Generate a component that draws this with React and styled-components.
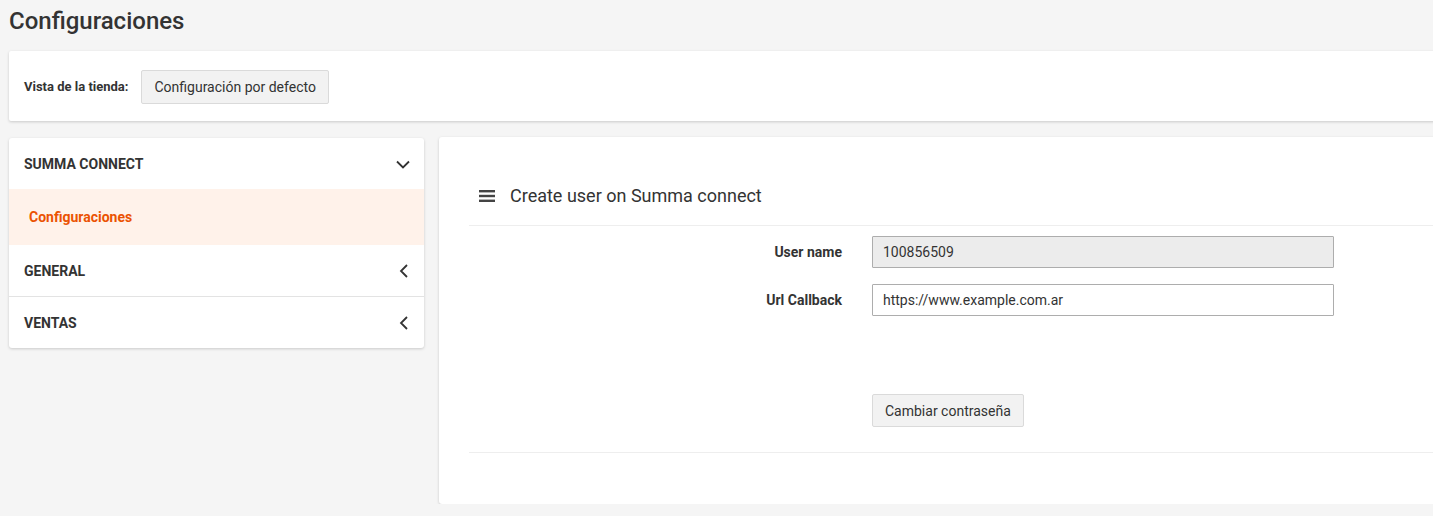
import { createGlobalStyle } from "styled-components";
import styled from "styled-components";

const GlobalStyle = createGlobalStyle`
  html, body {
    margin: 0;
    padding: 0;
    background: #f5f5f5;
    overflow: hidden;
  }
  body {
    font-family: Roboto, "Liberation Sans", sans-serif;
    color: #333;
  }
`;

const menu = [
  { title: "SUMMA CONNECT", open: true, items: ["Configuraciones"] },
  { title: "GENERAL", open: false, items: [] },
  { title: "VENTAS", open: false, items: [] },
];

function Chevron({ open }) {
  return (
    <svg width="14" height="14" viewBox="0 0 14 14" fill="none">
      {open ? (
        <path d="M1 4.5 L7 10.5 L13 4.5" stroke="#333" strokeWidth="1.8" />
      ) : (
        <path d="M11 1 L5 7 L11 13" stroke="#333" strokeWidth="1.8" />
      )}
    </svg>
  );
}

function HamburgerIcon() {
  return (
    <svg width="16" height="14" viewBox="0 0 16 14">
      <rect x="0" y="1" width="16" height="2.4" fill="#444" />
      <rect x="0" y="5.8" width="16" height="2.4" fill="#444" />
      <rect x="0" y="10.6" width="16" height="2.4" fill="#444" />
    </svg>
  );
}

export default function App() {
  return (
    <Page>
      <GlobalStyle />
      <Title>Configuraciones</Title>
      <StoreCard>
        <StoreLabel>Vista de la tienda:</StoreLabel>
        <GreyButton>Configuración por defecto</GreyButton>
      </StoreCard>
      <Columns>
        <Sidebar>
          {menu.map((section, i) => (
            <Section key={section.title} last={i === menu.length - 1}>
              <SectionHeader>
                <span>{section.title}</span>
                <Chevron open={section.open} />
              </SectionHeader>
              {section.items.map((item) => (
                <ActiveItem key={item}>{item}</ActiveItem>
              ))}
            </Section>
          ))}
        </Sidebar>
        <Panel>
          <PanelHeading>
            <HamburgerIcon />
            <span>Create user on Summa connect</span>
          </PanelHeading>
          <Form>
            <FieldRow>
              <FieldLabel>User name</FieldLabel>
              <Input value="100856509" disabled readOnly />
            </FieldRow>
            <FieldRow>
              <FieldLabel>Url Callback</FieldLabel>
              <Input value="https://www.example.com.ar" readOnly />
            </FieldRow>
            <ButtonRow>
              <FieldLabel />
              <GreyButton>Cambiar contraseña</GreyButton>
            </ButtonRow>
          </Form>
        </Panel>
      </Columns>
    </Page>
  );
}

const Page = styled.div`
  width: 1460px;
  padding: 0 0 0 9px;
`;

const Title = styled.h1`
  margin: 0;
  height: 51px;
  font-size: 24px;
  font-weight: 500;
  line-height: 43px;
  color: #333;
`;

const StoreCard = styled.div`
  display: flex;
  align-items: center;
  gap: 13px;
  height: 70px;
  padding: 1px 15px 0;
  box-sizing: border-box;
  background: #fff;
  box-shadow: 0 1px 3px rgba(0, 0, 0, 0.18);
  border-radius: 2px;
`;

const StoreLabel = styled.span`
  font-size: 13px;
  font-weight: 700;
  color: #333;
`;

const GreyButton = styled.button`
  height: 34px;
  padding: 0 12px;
  background: #f2f2f2;
  border: 1px solid #dadada;
  border-radius: 2px;
  font-family: Roboto, "Liberation Sans", sans-serif;
  font-size: 14px;
  color: #333;
`;

const Columns = styled.div`
  display: flex;
  align-items: flex-start;
  gap: 15px;
  margin-top: 16px;
`;

const Sidebar = styled.nav`
  width: 415px;
  margin-top: 1px;
  background: #fff;
  box-shadow: 0 1px 3px rgba(0, 0, 0, 0.18);
  border-radius: 3px;
  overflow: hidden;
`;

const Section = styled.div`
  border-bottom: ${(p) => (p.last ? "none" : "1px solid #e3e3e3")};
  &:first-child {
    border-bottom: none;
  }
`;

const SectionHeader = styled.div`
  display: flex;
  align-items: center;
  justify-content: space-between;
  height: 51px;
  padding: 0 14px 0 15px;
  font-size: 14px;
  font-weight: 700;
  color: #333;
`;

const ActiveItem = styled.div`
  display: flex;
  align-items: center;
  height: 56px;
  padding-left: 20px;
  background: #fff2ea;
  color: #eb5202;
  font-size: 14px;
  font-weight: 700;
`;

const Panel = styled.section`
  flex: 1;
  height: 367px;
  padding: 27px 0 0 30px;
  box-sizing: border-box;
  background: #fff;
  box-shadow: 0 1px 3px rgba(0, 0, 0, 0.18);
  border-radius: 3px;
`;

const PanelHeading = styled.div`
  display: flex;
  align-items: center;
  gap: 15px;
  height: 62px;
  box-sizing: border-box;
  padding: 2px 0 0 10px;
  border-bottom: 1px solid #eee;
  font-size: 18px;
  color: #333;
`;

const Form = styled.div`
  display: flex;
  flex-direction: column;
  gap: 16px;
  padding-top: 10px;
  padding-bottom: 25px;
  border-bottom: 1px solid #eee;
`;

const FieldRow = styled.div`
  display: flex;
  align-items: center;
  gap: 30px;
`;

const ButtonRow = styled(FieldRow)`
  margin-top: 62px;

  button {
    height: 33px;
  }
`;

const FieldLabel = styled.label`
  width: 373px;
  text-align: right;
  font-size: 14px;
  font-weight: 700;
  color: #333;
`;

const Input = styled.input`
  width: 462px;
  height: 32px;
  box-sizing: border-box;
  padding: 0 10px;
  border: 1px solid #adadad;
  border-radius: 1px;
  background: #fff;
  font-family: Roboto, "Liberation Sans", sans-serif;
  font-size: 14px;
  color: #333;
  &:disabled {
    background: #ececec;
    color: #333;
    border-color: #adadad;
    opacity: 1;
  }
`;
